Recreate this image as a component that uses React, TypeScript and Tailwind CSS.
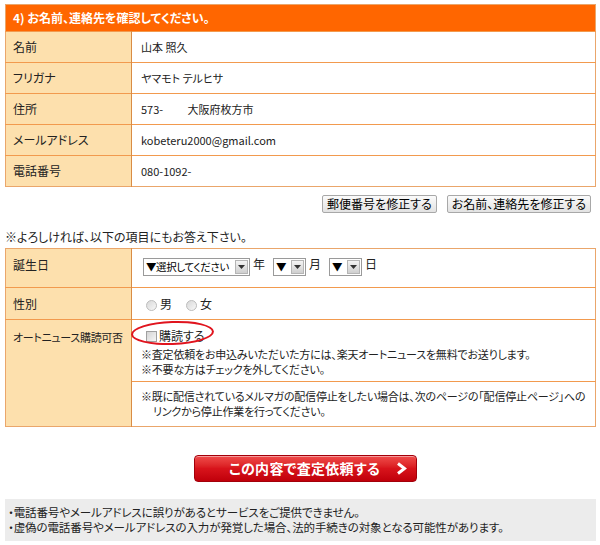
import React from "react";

const font = "font-['Noto_Sans_CJK_JP','Noto_Sans',sans-serif] [font-feature-settings:'palt']";

const confirmRows = [
  { label: "名前", value: "山本 照久" },
  { label: "フリガナ", value: "ヤマモト テルヒサ" },
  { label: "住所", value: "573-　　 大阪府枚方市" },
  { label: "メールアドレス", value: "kobeteru2000@gmail.com" },
  { label: "電話番号", value: "080-1092-" },
];

function FakeSelect({ text, width }: { text: string; width: string }) {
  return (
    <span className={`inline-flex h-[18px] items-stretch border border-[#9a9a9a] bg-white ${width}`}>
      <span className="flex flex-1 items-center whitespace-nowrap pl-[2px] text-[10.5px] leading-none tracking-[-0.4px] text-black">
        {text}
      </span>
      <span className="m-[1px] flex w-[13px] items-center justify-center border border-[#b5b5b5] bg-gradient-to-b from-[#f4f4f4] to-[#cfcfcf]">
        <svg width="7" height="4" viewBox="0 0 7 4">
          <path d="M0 0h7L3.5 4z" fill="#333" />
        </svg>
      </span>
    </span>
  );
}

function Radio({ label }: { label: string }) {
  return (
    <span className="inline-flex items-center gap-[3px]">
      <span className="mt-[3px] h-[11px] w-[11px] rounded-full border border-[#bdbdbd] bg-gradient-to-br from-[#d8d8d8] to-[#f8f8f8]" />
      <span>{label}</span>
    </span>
  );
}

export default function App() {
  return (
    <div className={`w-[600px] h-[545px] bg-white pt-[4px] text-[12px] text-[#222] ${font}`}>
      <table className="ml-[5px] w-[591px] border-collapse border border-[#eaa66b]">
        <tbody>
          <tr>
            <td colSpan={2} className="h-[27px] bg-[#ff6600] pl-[7px] text-[12px] font-bold text-white">
              4) お名前、連絡先を確認してください。
            </td>
          </tr>
          {confirmRows.map((row) => (
            <tr key={row.label} className="border-t border-[#f29a4e]">
              <td className="h-[31px] w-[126px] border-r border-[#d98c45] bg-[#fde0ad] pl-[7px]">{row.label}</td>
              <td className="pl-[9px] text-[11px]">{row.value}</td>
            </tr>
          ))}
        </tbody>
      </table>

      <div className="mt-[8px] mr-[9px] flex justify-end gap-[10px]">
        {["郵便番号を修正する", "お名前、連絡先を修正する"].map((t) => (
          <span
            key={t}
            className="flex h-[18px] items-center rounded-[2px] border border-[#a8a8a8] bg-gradient-to-b from-[#fbfbfb] to-[#e2e2e2] px-[4px] text-[12px] leading-none text-black"
          >
            {t}
          </span>
        ))}
      </div>

      <p className="mt-[17px] ml-[5px] text-[12px] leading-[14px]">※よろしければ、以下の項目にもお答え下さい。</p>

      <table className="mt-[4px] ml-[5px] w-[591px] table-fixed border-collapse border border-[#eaa66b]">
        <tbody>
          <tr>
            <td className="h-[39px] w-[126px] border-r border-[#d98c45] bg-[#fde0ad] pl-[7px] pt-[7px] align-top">誕生日</td>
            <td className="pl-[11px] pt-[9px] align-top">
              <div className="flex items-start gap-[3px]">
                <FakeSelect text="▼選択してください" width="w-[107px]" />
                <span className="-mt-[3px] mr-[5px]">年</span>
                <FakeSelect text="▼" width="w-[33px]" />
                <span className="-mt-[3px] mr-[5px]">月</span>
                <FakeSelect text="▼" width="w-[33px]" />
                <span className="-mt-[3px]">日</span>
              </div>
            </td>
          </tr>
          <tr className="border-t border-[#f29a4e]">
            <td className="h-[32px] border-r border-[#d98c45] bg-[#fde0ad] pl-[7px]">性別</td>
            <td className="pl-[14px]">
              <div className="flex gap-[14px] pt-[1px]">
                <Radio label="男" />
                <Radio label="女" />
              </div>
            </td>
          </tr>
          <tr className="border-t border-[#f29a4e]">
            <td
              rowSpan={2}
              className="whitespace-nowrap border-r border-[#d98c45] bg-[#fde0ad] pl-[7px] pt-[9px] align-top text-[11px] tracking-[-0.3px]"
            >
              オートニュース購読可否
            </td>
            <td className="h-[62px] pl-[9px] align-top">
              <div className="relative pt-[7px]">
                <span className="inline-flex items-center gap-[2px]">
                  <span className="ml-[5px] h-[11px] w-[11px] border border-[#a0a0a0] bg-gradient-to-br from-[#d4d4d4] to-[#f6f6f6]" />
                  <span>購読する</span>
                </span>
                <span className="pointer-events-none absolute left-[-10px] top-[1px] h-[24px] w-[83px] rounded-[50%] border-[2.5px] border-[#e0141e] [transform:rotate(-2deg)]" />
                <div className="mt-[1px] text-[11px] leading-[15px] tracking-[-0.2px]">
                  <p>※査定依頼をお申込みいただいた方には、楽天オートニュースを無料でお送りします。</p>
                  <p>※不要な方はチェックを外してください。</p>
                </div>
              </div>
            </td>
          </tr>
          <tr className="border-t border-[#f29a4e]">
            <td className="h-[45px] pl-[9px] text-[11px] leading-[15px] tracking-[-0.2px]">
              <p>※既に配信されているメルマガの配信停止をしたい場合は、次のページの「配信停止ページ」への</p>
              <p className="pl-[12px]">リンクから停止作業を行ってください。</p>
            </td>
          </tr>
        </tbody>
      </table>

      <div className="mt-[28px] flex justify-center">
        <span className="ml-[11px] flex h-[27px] w-[223px] items-center justify-end gap-[16px] rounded-[4px] border border-[#a3000a] bg-gradient-to-b from-[#f04a4a] via-[#d8131b] to-[#c0000a] pr-[8px] shadow-[inset_0_1px_0_rgba(255,255,255,0.45)]">
          <span className="text-[14px] font-bold tracking-[0.3px] text-white">この内容で査定依頼する</span>
          <svg width="12" height="13" viewBox="0 0 12 13">
            <path d="M2 1.5L8.5 6.5L2 11.5" fill="none" stroke="white" strokeWidth="3" />
          </svg>
        </span>
      </div>

      <div className="mt-[17px] ml-[5px] w-[591px] bg-[#ececec] py-[6px] pl-[3px] text-[11.5px] leading-[15px] tracking-[-0.1px]">
        <p>・電話番号やメールアドレスに誤りがあるとサービスをご提供できません。</p>
        <p>・虚偽の電話番号やメールアドレスの入力が発覚した場合、法的手続きの対象となる可能性があります。</p>
      </div>
    </div>
  );
}
